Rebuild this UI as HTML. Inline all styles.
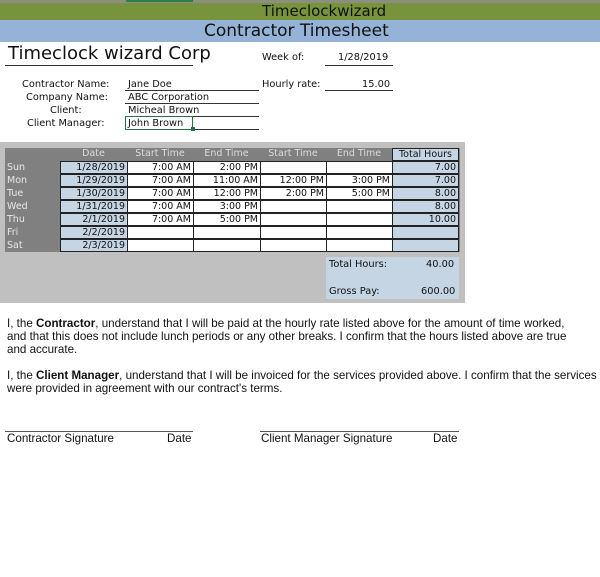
<!DOCTYPE html>
<html><head><style>
*{margin:0;padding:0;box-sizing:border-box}
body{width:600px;height:577px;background:#fff;position:relative;overflow:hidden;font-family:"DejaVu Sans",Verdana,sans-serif;color:#111}
.a{position:absolute;white-space:nowrap}
.s{font-size:9.8px}
.c{position:absolute;height:13px;font-size:9.5px;line-height:12px;text-align:right;padding-right:2px;white-space:nowrap}
.w{background:#fff;border:1px solid #222}
.b{background:#c5d5e4;border:1px solid #222}
.h{color:#dcdcdc;text-align:center;padding:0}
.p{font-family:"Liberation Sans",sans-serif;font-size:11.6px;line-height:13px}
</style></head><body>
<div class="a" style="left:0;top:0;width:600px;height:3px;background:#8a8f80"></div>
<div class="a" style="left:126px;top:0;width:67px;height:2px;background:#2e7d46"></div>
<div class="a" style="left:0;top:3px;width:600px;height:17px;background:#77933c"></div>
<div class="a" style="left:0;top:20px;width:600px;height:22px;background:#95b3d7"></div>
<div class="a" style="left:262px;top:2px;font-size:15px;line-height:18px">Timeclockwizard</div>
<div class="a" style="left:204px;top:20px;font-size:17px;line-height:22px">Contractor Timesheet</div>

<div class="a" style="left:8px;top:43px;font-size:18px;line-height:22px">Timeclock wizard Corp</div>
<div class="a" style="left:5px;top:65px;width:188px;height:1px;background:#333"></div>
<div class="a s" style="left:262px;top:52px">Week of:</div>
<div class="a s" style="left:338px;top:52px">1/28/2019</div>
<div class="a" style="left:325px;top:65px;width:68px;height:1px;background:#333"></div>

<div class="a s" style="left:22px;top:79px">Contractor Name:</div>
<div class="a s" style="left:26px;top:92px">Company Name:</div>
<div class="a s" style="left:50px;top:105px">Client:</div>
<div class="a s" style="left:27px;top:118px">Client Manager:</div>
<div class="a s" style="left:128px;top:79px">Jane Doe</div>
<div class="a s" style="left:128px;top:92px">ABC Corporation</div>
<div class="a s" style="left:128px;top:105px">Micheal Brown</div>
<div class="a s" style="left:128px;top:118px">John Brown</div>
<div class="a" style="left:125px;top:90px;width:134px;height:1px;background:#333"></div>
<div class="a" style="left:125px;top:103px;width:134px;height:1px;background:#333"></div>
<div class="a" style="left:125px;top:116px;width:134px;height:1px;background:#333"></div>
<div class="a" style="left:125px;top:129px;width:134px;height:1px;background:#333"></div>
<div class="a" style="left:125px;top:116px;width:68px;height:14px;border:1px solid #217346"></div>
<div class="a" style="left:191px;top:127px;width:4px;height:4px;background:#217346"></div>
<div class="a s" style="left:262px;top:79px">Hourly rate:</div>
<div class="a s" style="left:362px;top:79px">15.00</div>
<div class="a" style="left:325px;top:90px;width:68px;height:1px;background:#333"></div>

<div class="a" style="left:0;top:142px;width:465px;height:161px;background:#c0c0c0"></div>
<div class="a" style="left:5px;top:148px;width:455px;height:104px;background:#808080"></div>
<div class="a" style="left:326px;top:257px;width:133px;height:42px;background:#c5d5e4"></div>
<div class="a s" style="left:329px;top:259px">Total Hours:</div>
<div class="a s" style="left:426px;top:259px">40.00</div>
<div class="a s" style="left:329px;top:286px">Gross Pay:</div>
<div class="a s" style="left:421px;top:286px">600.00</div>

<div class="c h" style="left:60px;top:148px;width:67px">Date</div>
<div class="c h" style="left:127px;top:148px;width:66px">Start Time</div>
<div class="c h" style="left:193px;top:148px;width:67px">End Time</div>
<div class="c h" style="left:260px;top:148px;width:66px">Start Time</div>
<div class="c h" style="left:326px;top:148px;width:66px">End Time</div>
<div class="c b" style="left:392px;top:148px;width:67px;text-align:center;padding:0">Total Hours</div>

<div class="a" style="left:7px;top:161px;color:#e8e8e8;font-size:9.5px;line-height:13px">Sun<br>Mon<br>Tue<br>Wed<br>Thu<br>Fri<br>Sat</div>

<div class="c b" style="left:60px;top:161px;width:68px">1/28/2019</div><div class="c w" style="left:127px;top:161px;width:67px">7:00 AM</div><div class="c w" style="left:193px;top:161px;width:68px">2:00 PM</div><div class="c w" style="left:260px;top:161px;width:67px"></div><div class="c w" style="left:326px;top:161px;width:67px"></div><div class="c b" style="left:392px;top:161px;width:67px">7.00</div>
<div class="c b" style="left:60px;top:174px;width:68px">1/29/2019</div><div class="c w" style="left:127px;top:174px;width:67px">7:00 AM</div><div class="c w" style="left:193px;top:174px;width:68px">11:00 AM</div><div class="c w" style="left:260px;top:174px;width:67px">12:00 PM</div><div class="c w" style="left:326px;top:174px;width:67px">3:00 PM</div><div class="c b" style="left:392px;top:174px;width:67px">7.00</div>
<div class="c b" style="left:60px;top:187px;width:68px">1/30/2019</div><div class="c w" style="left:127px;top:187px;width:67px">7:00 AM</div><div class="c w" style="left:193px;top:187px;width:68px">12:00 PM</div><div class="c w" style="left:260px;top:187px;width:67px">2:00 PM</div><div class="c w" style="left:326px;top:187px;width:67px">5:00 PM</div><div class="c b" style="left:392px;top:187px;width:67px">8.00</div>
<div class="c b" style="left:60px;top:200px;width:68px">1/31/2019</div><div class="c w" style="left:127px;top:200px;width:67px">7:00 AM</div><div class="c w" style="left:193px;top:200px;width:68px">3:00 PM</div><div class="c w" style="left:260px;top:200px;width:67px"></div><div class="c w" style="left:326px;top:200px;width:67px"></div><div class="c b" style="left:392px;top:200px;width:67px">8.00</div>
<div class="c b" style="left:60px;top:213px;width:68px">2/1/2019</div><div class="c w" style="left:127px;top:213px;width:67px">7:00 AM</div><div class="c w" style="left:193px;top:213px;width:68px">5:00 PM</div><div class="c w" style="left:260px;top:213px;width:67px"></div><div class="c w" style="left:326px;top:213px;width:67px"></div><div class="c b" style="left:392px;top:213px;width:67px">10.00</div>
<div class="c b" style="left:60px;top:226px;width:68px">2/2/2019</div><div class="c w" style="left:127px;top:226px;width:67px"></div><div class="c w" style="left:193px;top:226px;width:68px"></div><div class="c w" style="left:260px;top:226px;width:67px"></div><div class="c w" style="left:326px;top:226px;width:67px"></div><div class="c b" style="left:392px;top:226px;width:67px"></div>
<div class="c b" style="left:60px;top:239px;width:68px">2/3/2019</div><div class="c w" style="left:127px;top:239px;width:67px"></div><div class="c w" style="left:193px;top:239px;width:68px"></div><div class="c w" style="left:260px;top:239px;width:67px"></div><div class="c w" style="left:326px;top:239px;width:67px"></div><div class="c b" style="left:392px;top:239px;width:67px"></div>

<div class="a p" style="left:7px;top:317px">I, the <b>Contractor</b>, understand that I will be paid at the hourly rate listed above for the amount of time worked,<br>and that this does not include lunch periods or any other breaks. I confirm that the hours listed above are true<br>and accurate.</div>
<div class="a p" style="left:7px;top:369px">I, the <b>Client Manager</b>, understand that I will be invoiced for the services provided above. I confirm that the services<br>were provided in agreement with our contract's terms.</div>

<div class="a" style="left:5px;top:431px;width:188px;height:1px;background:#555"></div>
<div class="a" style="left:260px;top:431px;width:199px;height:1px;background:#555"></div>
<div class="a p" style="left:7px;top:432px">Contractor Signature</div>
<div class="a p" style="left:167px;top:432px">Date</div>
<div class="a p" style="left:261px;top:432px">Client Manager Signature</div>
<div class="a p" style="left:433px;top:432px">Date</div>
</body></html>
